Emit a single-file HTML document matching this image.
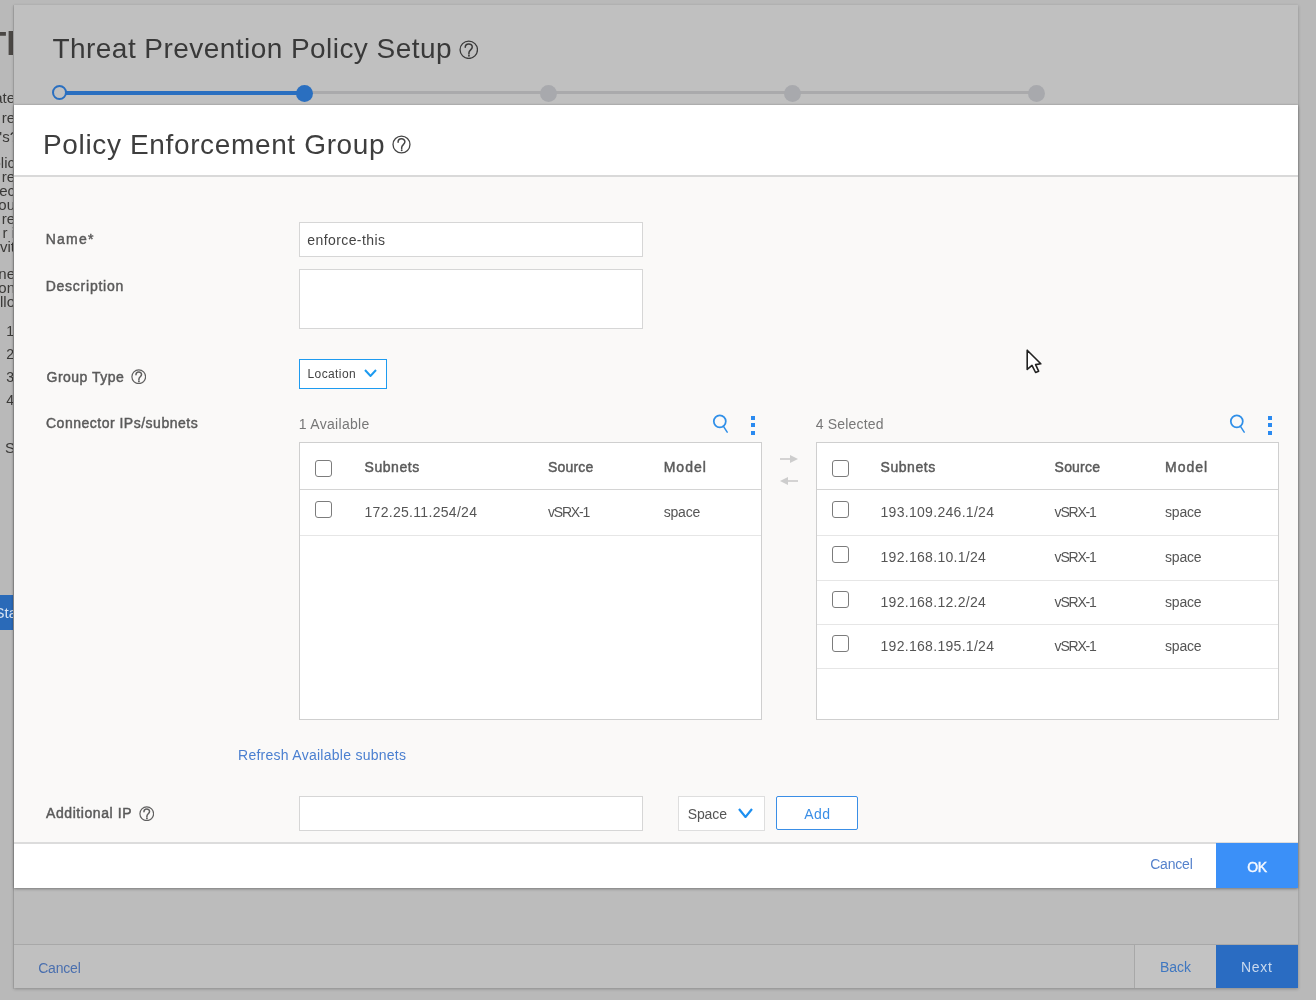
<!DOCTYPE html>
<html><head><meta charset="utf-8"><style>
html,body{margin:0;padding:0;width:1316px;height:1000px;overflow:hidden;background:#b9b9b9;font-family:"Liberation Sans", sans-serif;}
#w{position:absolute;left:0;top:0;width:1316px;height:1000px;will-change:transform;}
.t{position:absolute;white-space:nowrap;line-height:1;font-family:"Liberation Sans", sans-serif;}
</style></head><body>
<div id="w"><div style="position:absolute;left:0;top:0;width:14px;height:1000px;overflow:hidden">
<div class="t" style="left:27px;top:25.72px;font-size:34px;font-weight:700;color:#4a4744;transform:translateX(-100%)">Th</div>
<div class="t" style="left:15px;top:90.30px;font-size:15px;font-weight:400;color:#3a3937;transform:translateX(-100%)">ate</div>
<div class="t" style="left:15px;top:110.30px;font-size:15px;font-weight:400;color:#3a3937;transform:translateX(-100%)">re</div>
<div class="t" style="left:18px;top:129.30px;font-size:15px;font-weight:400;color:#3a3937;transform:translateX(-100%)">P's?</div>
<div class="t" style="left:15px;top:155.30px;font-size:15px;font-weight:400;color:#3a3937;transform:translateX(-100%)">olic</div>
<div class="t" style="left:15px;top:169.30px;font-size:15px;font-weight:400;color:#3a3937;transform:translateX(-100%)">re</div>
<div class="t" style="left:15px;top:183.30px;font-size:15px;font-weight:400;color:#3a3937;transform:translateX(-100%)">fec</div>
<div class="t" style="left:15px;top:197.30px;font-size:15px;font-weight:400;color:#3a3937;transform:translateX(-100%)">ou</div>
<div class="t" style="left:15px;top:211.30px;font-size:15px;font-weight:400;color:#3a3937;transform:translateX(-100%)">re</div>
<div class="t" style="left:15px;top:225.30px;font-size:15px;font-weight:400;color:#3a3937;transform:translateX(-100%)">r i</div>
<div class="t" style="left:15px;top:239.30px;font-size:15px;font-weight:400;color:#3a3937;transform:translateX(-100%)">vit</div>
<div class="t" style="left:15px;top:266.30px;font-size:15px;font-weight:400;color:#3a3937;transform:translateX(-100%)">ne</div>
<div class="t" style="left:15px;top:280.30px;font-size:15px;font-weight:400;color:#3a3937;transform:translateX(-100%)">on</div>
<div class="t" style="left:15px;top:294.30px;font-size:15px;font-weight:400;color:#3a3937;transform:translateX(-100%)">llo</div>
<div class="t" style="left:14px;top:324.15px;font-size:14px;font-weight:400;color:#3a3937;transform:translateX(-100%)">1</div>
<div class="t" style="left:14px;top:347.15px;font-size:14px;font-weight:400;color:#3a3937;transform:translateX(-100%)">2</div>
<div class="t" style="left:14px;top:370.15px;font-size:14px;font-weight:400;color:#3a3937;transform:translateX(-100%)">3</div>
<div class="t" style="left:14px;top:393.15px;font-size:14px;font-weight:400;color:#3a3937;transform:translateX(-100%)">4</div>
<div class="t" style="left:15px;top:440.30px;font-size:15px;font-weight:400;color:#3a3937;transform:translateX(-100%)">S</div>
<div style="position:absolute;left:0px;top:595px;width:14px;height:35px;background:#2a6ab8"></div>
<div class="t" style="left:17px;top:605.30px;font-size:15px;font-weight:400;color:#d8e4f2;transform:translateX(-100%)">Sta</div>
</div>
<div style="position:absolute;left:13px;top:5px;width:1px;height:984px;background:#acacac"></div>
<div style="position:absolute;left:14px;top:5px;width:1284px;height:983px;background:#c0c0c0;box-shadow:0 1px 3px rgba(0,0,0,0.25)"></div>
<div class="t" style="left:52.5px;top:34.80px;font-size:28px;font-weight:400;color:#393939;letter-spacing:0.448px;">Threat Prevention Policy Setup</div>
<svg style="position:absolute;left:458.75px;top:39.85px" width="19.5" height="19.5" viewBox="0 0 20 20"><circle cx="10" cy="10" r="8.93" fill="none" stroke="#3a3a3a" stroke-width="1.33"/><path d="M6.4,7.5 C6.4,2.9 13.6,2.9 13.6,7.2 C13.6,9.9 10.2,10.3 10.2,13.1 L10.2,14.3" fill="none" stroke="#3a3a3a" stroke-width="1.54" stroke-linecap="round"/><circle cx="10.2" cy="16.1" r="0.97" fill="#3a3a3a"/></svg>
<div style="position:absolute;left:60px;top:91px;width:244px;height:4px;background:#2a6fc0"></div>
<div style="position:absolute;left:304px;top:90.6px;width:732px;height:3.5px;background:#aaaaac"></div>
<div style="position:absolute;left:51.7px;top:84.5px;width:11.4px;height:11.4px;border:2.8px solid #2a6fc0;border-radius:50%;background:#c0c0c0"></div>
<div style="position:absolute;left:295.5px;top:84.5px;width:17px;height:17px;border-radius:50%;background:#2a6fc0"></div>
<div style="position:absolute;left:539.5px;top:84.5px;width:17px;height:17px;border-radius:50%;background:#a8a9ad"></div>
<div style="position:absolute;left:783.5px;top:84.5px;width:17px;height:17px;border-radius:50%;background:#a8a9ad"></div>
<div style="position:absolute;left:1027.5px;top:84.5px;width:17px;height:17px;border-radius:50%;background:#a8a9ad"></div>
<div style="position:absolute;left:14px;top:888px;width:1284px;height:56px;background:#bcbcbc"></div>
<div style="position:absolute;left:14px;top:944px;width:1284px;height:1px;background:#a8a8a8"></div>
<div class="t" style="left:38.2px;top:961.15px;font-size:14px;font-weight:400;color:#4a6fae;letter-spacing:-0.2px;">Cancel</div>
<div style="position:absolute;left:1134px;top:945px;width:1px;height:43px;background:#a8a8a8"></div>
<div style="position:absolute;left:1135px;top:945px;width:81px;height:43px;background:#c3c3c3"></div>
<div class="t" style="left:1160px;top:960.15px;font-size:14px;font-weight:400;color:#3f77c0;letter-spacing:0px;">Back</div>
<div style="position:absolute;left:1216px;top:945px;width:82px;height:43px;background:#2a6cc2"></div>
<div class="t" style="left:1241px;top:960.15px;font-size:14px;font-weight:400;color:#c9d9ee;letter-spacing:0.667px;">Next</div>
<div style="position:absolute;left:14px;top:105px;width:1284px;height:783px;background:#faf9f8;box-shadow:0 1px 3px rgba(0,0,0,0.3), 0 0 2px rgba(0,0,0,0.15)"></div>
<div style="position:absolute;left:14px;top:105px;width:1284px;height:70px;background:#fff"></div>
<div style="position:absolute;left:14px;top:175px;width:1284px;height:2px;background:#d9d9d9"></div>
<div class="t" style="left:43px;top:130.60px;font-size:28px;font-weight:400;color:#3e3e3e;letter-spacing:0.643px;">Policy Enforcement Group</div>
<svg style="position:absolute;left:392.10px;top:135.30px" width="19" height="19" viewBox="0 0 20 20"><circle cx="10" cy="10" r="8.92" fill="none" stroke="#444" stroke-width="1.37"/><path d="M6.4,7.5 C6.4,2.9 13.6,2.9 13.6,7.2 C13.6,9.9 10.2,10.3 10.2,13.1 L10.2,14.3" fill="none" stroke="#444" stroke-width="1.58" stroke-linecap="round"/><circle cx="10.2" cy="16.1" r="1.00" fill="#444"/></svg>
<div style="position:absolute;left:14px;top:843px;width:1284px;height:45px;background:#fff"></div>
<div style="position:absolute;left:14px;top:842px;width:1284px;height:1.5px;background:#dcdcdc"></div>
<div class="t" style="left:1150.2px;top:857.45px;font-size:14px;font-weight:400;color:#5582cc;letter-spacing:-0.2px;">Cancel</div>
<div style="position:absolute;left:1216px;top:843px;width:82px;height:45px;background:#3b90f8"></div>
<div class="t" style="left:1247.3px;top:860.15px;font-size:14px;font-weight:400;color:#f4f8ff;letter-spacing:-0.5px;-webkit-text-stroke:0.45px #f4f8ff;">OK</div>
<div class="t" style="left:45.7px;top:232.15px;font-size:14px;font-weight:400;color:#5a5a5a;letter-spacing:1.25px;-webkit-text-stroke:0.45px #5a5a5a;">Name*</div>
<div class="t" style="left:45.7px;top:278.65px;font-size:14px;font-weight:400;color:#5a5a5a;letter-spacing:0.76px;-webkit-text-stroke:0.45px #5a5a5a;">Description</div>
<div class="t" style="left:46.5px;top:370.15px;font-size:14px;font-weight:400;color:#5a5a5a;letter-spacing:0.49px;-webkit-text-stroke:0.45px #5a5a5a;">Group Type</div>
<svg style="position:absolute;left:130.75px;top:368.55px" width="15.5" height="15.5" viewBox="0 0 20 20"><circle cx="10" cy="10" r="8.83" fill="none" stroke="#606060" stroke-width="1.55"/><path d="M6.4,7.5 C6.4,2.9 13.6,2.9 13.6,7.2 C13.6,9.9 10.2,10.3 10.2,13.1 L10.2,14.3" fill="none" stroke="#606060" stroke-width="1.94" stroke-linecap="round"/><circle cx="10.2" cy="16.1" r="1.23" fill="#606060"/></svg>
<div class="t" style="left:46px;top:416.15px;font-size:14px;font-weight:400;color:#5a5a5a;letter-spacing:0.5px;-webkit-text-stroke:0.45px #5a5a5a;">Connector IPs/subnets</div>
<div class="t" style="left:46px;top:806.45px;font-size:14px;font-weight:400;color:#5a5a5a;letter-spacing:0.58px;-webkit-text-stroke:0.45px #5a5a5a;">Additional IP</div>
<svg style="position:absolute;left:138.95px;top:805.95px" width="15.5" height="15.5" viewBox="0 0 20 20"><circle cx="10" cy="10" r="8.83" fill="none" stroke="#606060" stroke-width="1.55"/><path d="M6.4,7.5 C6.4,2.9 13.6,2.9 13.6,7.2 C13.6,9.9 10.2,10.3 10.2,13.1 L10.2,14.3" fill="none" stroke="#606060" stroke-width="1.94" stroke-linecap="round"/><circle cx="10.2" cy="16.1" r="1.23" fill="#606060"/></svg>
<div style="position:absolute;left:299px;top:222px;width:342px;height:33px;background:#fff;border:1px solid #d6d6d6"></div>
<div class="t" style="left:307.3px;top:233.15px;font-size:14px;font-weight:400;color:#444;letter-spacing:0.41px;">enforce-this</div>
<div style="position:absolute;left:299px;top:269px;width:342px;height:58px;background:#fff;border:1px solid #d6d6d6"></div>
<div style="position:absolute;left:299px;top:359px;width:86px;height:28px;background:#fff;border:1.5px solid #1d9bf0"></div>
<div class="t" style="left:307.5px;top:367.64px;font-size:12px;font-weight:400;color:#444;letter-spacing:0.4px;">Location</div>
<svg style="position:absolute;left:364px;top:369px" width="13" height="8" viewBox="0 0 13 8"><polyline points="1,1 6.5,7 12,1" fill="none" stroke="#1d9bf0" stroke-width="2"/></svg>
<div class="t" style="left:298.8px;top:416.55px;font-size:14px;font-weight:400;color:#777;letter-spacing:0.3px;">1 Available</div>
<div class="t" style="left:815.8px;top:416.55px;font-size:14px;font-weight:400;color:#777;letter-spacing:0.17px;">4 Selected</div>
<svg style="position:absolute;left:711.5px;top:414px" width="18" height="20" viewBox="0 0 18 20"><circle cx="7.8" cy="7.3" r="6.0" fill="none" stroke="#2f8fe8" stroke-width="1.75"/><line x1="11.3" y1="12.2" x2="15.2" y2="18.2" stroke="#2f8fe8" stroke-width="1.5" stroke-linecap="round"/></svg>
<div style="position:absolute;left:750.6px;top:415.7px;width:4.3px;height:4px;background:#2a8af0"></div>
<div style="position:absolute;left:750.6px;top:423.2px;width:4.3px;height:4px;background:#2a8af0"></div>
<div style="position:absolute;left:750.6px;top:430.5px;width:4.3px;height:4px;background:#2a8af0"></div>
<svg style="position:absolute;left:1229px;top:414px" width="18" height="20" viewBox="0 0 18 20"><circle cx="7.8" cy="7.3" r="6.0" fill="none" stroke="#2f8fe8" stroke-width="1.75"/><line x1="11.3" y1="12.2" x2="15.2" y2="18.2" stroke="#2f8fe8" stroke-width="1.5" stroke-linecap="round"/></svg>
<div style="position:absolute;left:1267.5px;top:415.7px;width:4.3px;height:4px;background:#2a8af0"></div>
<div style="position:absolute;left:1267.5px;top:423.2px;width:4.3px;height:4px;background:#2a8af0"></div>
<div style="position:absolute;left:1267.5px;top:430.5px;width:4.3px;height:4px;background:#2a8af0"></div>
<svg style="position:absolute;left:778px;top:452px" width="22" height="34" viewBox="0 0 22 34"><line x1="2" y1="7" x2="14" y2="7" stroke="#cdcdcd" stroke-width="1.7"/><polygon points="12,3 20,7 12,11" fill="#cdcdcd"/><line x1="8" y1="29" x2="20" y2="29" stroke="#cdcdcd" stroke-width="1.7"/><polygon points="10,25 2,29 10,33" fill="#cdcdcd"/></svg>
<div style="position:absolute;left:299px;top:441.5px;width:461px;height:276.5px;background:#fff;border:1px solid #cfcfcf"></div>
<div style="position:absolute;left:300px;top:489px;width:461px;height:1.2px;background:#d4d4d4"></div>
<div style="position:absolute;left:315px;top:460px;width:15px;height:15px;border:1.4px solid #7c7c7c;border-radius:3px;background:#fff"></div>
<div class="t" style="left:364.5px;top:460.15px;font-size:14px;font-weight:400;color:#5a5a5a;letter-spacing:0.55px;-webkit-text-stroke:0.45px #5a5a5a;">Subnets</div>
<div class="t" style="left:548px;top:460.15px;font-size:14px;font-weight:400;color:#5a5a5a;letter-spacing:0.2px;-webkit-text-stroke:0.45px #5a5a5a;">Source</div>
<div class="t" style="left:663.7px;top:460.15px;font-size:14px;font-weight:400;color:#5a5a5a;letter-spacing:1.0px;-webkit-text-stroke:0.45px #5a5a5a;">Model</div>
<div style="position:absolute;left:315px;top:501px;width:15px;height:15px;border:1.4px solid #7c7c7c;border-radius:3px;background:#fff"></div>
<div class="t" style="left:364.5px;top:505.15px;font-size:14px;font-weight:400;color:#555;letter-spacing:0.3px;">172.25.11.254/24</div>
<div class="t" style="left:548px;top:505.15px;font-size:14px;font-weight:400;color:#555;letter-spacing:-1.2px;">vSRX-1</div>
<div class="t" style="left:663.7px;top:505.15px;font-size:14px;font-weight:400;color:#555;letter-spacing:-0.2px;">space</div>
<div style="position:absolute;left:300px;top:534.5px;width:461px;height:1px;background:#e6e6e6"></div>
<div style="position:absolute;left:816px;top:441.5px;width:461px;height:276.5px;background:#fff;border:1px solid #cfcfcf"></div>
<div style="position:absolute;left:817px;top:489px;width:461px;height:1.2px;background:#d4d4d4"></div>
<div style="position:absolute;left:832px;top:460px;width:15px;height:15px;border:1.4px solid #7c7c7c;border-radius:3px;background:#fff"></div>
<div class="t" style="left:880.5px;top:460.15px;font-size:14px;font-weight:400;color:#5a5a5a;letter-spacing:0.55px;-webkit-text-stroke:0.45px #5a5a5a;">Subnets</div>
<div class="t" style="left:1054.6px;top:460.15px;font-size:14px;font-weight:400;color:#5a5a5a;letter-spacing:0.2px;-webkit-text-stroke:0.45px #5a5a5a;">Source</div>
<div class="t" style="left:1165px;top:460.15px;font-size:14px;font-weight:400;color:#5a5a5a;letter-spacing:1.0px;-webkit-text-stroke:0.45px #5a5a5a;">Model</div>
<div style="position:absolute;left:832px;top:501px;width:15px;height:15px;border:1.4px solid #7c7c7c;border-radius:3px;background:#fff"></div>
<div class="t" style="left:880.5px;top:505.15px;font-size:14px;font-weight:400;color:#555;letter-spacing:0.3px;">193.109.246.1/24</div>
<div class="t" style="left:1054.6px;top:505.15px;font-size:14px;font-weight:400;color:#555;letter-spacing:-1.2px;">vSRX-1</div>
<div class="t" style="left:1165px;top:505.15px;font-size:14px;font-weight:400;color:#555;letter-spacing:-0.2px;">space</div>
<div style="position:absolute;left:817px;top:535px;width:461px;height:1px;background:#e6e6e6"></div>
<div style="position:absolute;left:832px;top:546px;width:15px;height:15px;border:1.4px solid #7c7c7c;border-radius:3px;background:#fff"></div>
<div class="t" style="left:880.5px;top:550.15px;font-size:14px;font-weight:400;color:#555;letter-spacing:0.3px;">192.168.10.1/24</div>
<div class="t" style="left:1054.6px;top:550.15px;font-size:14px;font-weight:400;color:#555;letter-spacing:-1.2px;">vSRX-1</div>
<div class="t" style="left:1165px;top:550.15px;font-size:14px;font-weight:400;color:#555;letter-spacing:-0.2px;">space</div>
<div style="position:absolute;left:817px;top:579.5px;width:461px;height:1px;background:#e6e6e6"></div>
<div style="position:absolute;left:832px;top:590.5px;width:15px;height:15px;border:1.4px solid #7c7c7c;border-radius:3px;background:#fff"></div>
<div class="t" style="left:880.5px;top:594.65px;font-size:14px;font-weight:400;color:#555;letter-spacing:0.3px;">192.168.12.2/24</div>
<div class="t" style="left:1054.6px;top:594.65px;font-size:14px;font-weight:400;color:#555;letter-spacing:-1.2px;">vSRX-1</div>
<div class="t" style="left:1165px;top:594.65px;font-size:14px;font-weight:400;color:#555;letter-spacing:-0.2px;">space</div>
<div style="position:absolute;left:817px;top:623.8px;width:461px;height:1px;background:#e6e6e6"></div>
<div style="position:absolute;left:832px;top:634.8px;width:15px;height:15px;border:1.4px solid #7c7c7c;border-radius:3px;background:#fff"></div>
<div class="t" style="left:880.5px;top:638.95px;font-size:14px;font-weight:400;color:#555;letter-spacing:0.3px;">192.168.195.1/24</div>
<div class="t" style="left:1054.6px;top:638.95px;font-size:14px;font-weight:400;color:#555;letter-spacing:-1.2px;">vSRX-1</div>
<div class="t" style="left:1165px;top:638.95px;font-size:14px;font-weight:400;color:#555;letter-spacing:-0.2px;">space</div>
<div style="position:absolute;left:817px;top:668px;width:461px;height:1px;background:#e6e6e6"></div>
<div class="t" style="left:238px;top:747.65px;font-size:14px;font-weight:400;color:#4a7fd0;letter-spacing:0.267px;">Refresh Available subnets</div>
<div style="position:absolute;left:299px;top:796px;width:342px;height:33px;background:#fff;border:1px solid #d6d6d6"></div>
<div style="position:absolute;left:678px;top:796px;width:85px;height:33px;background:#fff;border:1px solid #dedede"></div>
<div class="t" style="left:687.7px;top:806.55px;font-size:14px;font-weight:400;color:#555;letter-spacing:-0.1px;">Space</div>
<svg style="position:absolute;left:738px;top:807.5px" width="15" height="10" viewBox="0 0 15 10"><polyline points="1,1 7.5,9 14,1" fill="none" stroke="#1d8ff0" stroke-width="2.2"/></svg>
<div style="position:absolute;left:776px;top:796px;width:80px;height:32px;background:#fff;border:1.5px solid #3a8ee6;border-radius:2px"></div>
<div class="t" style="left:804.2px;top:807.45px;font-size:14px;font-weight:400;color:#3a8ee6;letter-spacing:0.5px;">Add</div>
<svg style="position:absolute;left:1025px;top:347.6px" width="20" height="28" viewBox="0 0 20 28"><polygon points="2.2,2.2 2.2,21.4 7,17.4 10.6,24.5 13.6,23.2 10.6,16.6 15.8,15.8" fill="#fff" stroke="#222" stroke-width="1.6" stroke-linejoin="round"/></svg></div>
</body></html>
